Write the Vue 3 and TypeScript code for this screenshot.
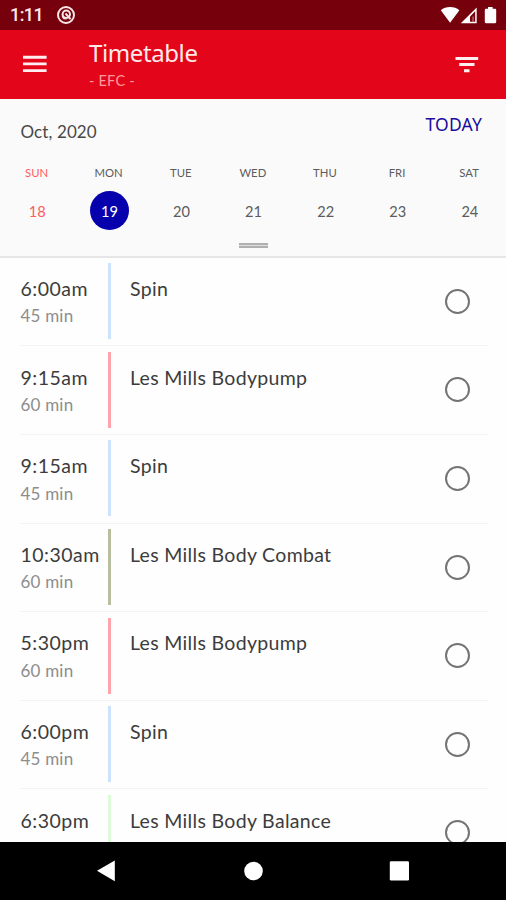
<script setup lang="ts">
interface Day { name: string; num: number }
interface Session { time: string; mins?: number; title: string; tone: string }

const days: Day[] = [
  { name: 'SUN', num: 18 },
  { name: 'MON', num: 19 },
  { name: 'TUE', num: 20 },
  { name: 'WED', num: 21 },
  { name: 'THU', num: 22 },
  { name: 'FRI', num: 23 },
  { name: 'SAT', num: 24 },
]
const selected = 19

const sessions: Session[] = [
  { time: '6:00am', mins: 45, title: 'Spin', tone: 'blue' },
  { time: '9:15am', mins: 60, title: 'Les Mills Bodypump', tone: 'pink' },
  { time: '9:15am', mins: 45, title: 'Spin', tone: 'blue' },
  { time: '10:30am', mins: 60, title: 'Les Mills Body Combat', tone: 'olive' },
  { time: '5:30pm', mins: 60, title: 'Les Mills Bodypump', tone: 'pink' },
  { time: '6:00pm', mins: 45, title: 'Spin', tone: 'blue' },
  { time: '6:30pm', title: 'Les Mills Body Balance', tone: 'green' },
]
</script>

<template>
  <div class="screen">
    <div class="status">
      <span class="clock">1:11</span>
      <svg class="app-icon" width="20" height="20" viewBox="0 0 20 20">
        <circle cx="10" cy="10" r="8" fill="none" stroke="#f8e6e7" stroke-width="2" />
        <circle cx="10.300" cy="9.200" r="3.700" fill="none" stroke="#f8e6e7" stroke-width="2" />
        <path d="M9.500 8.500 14.600 14.200" stroke="#f8e6e7" stroke-width="2" />
        <path d="M5.800 9.500 10.800 14.500 7.500 14.200 5.800 12z" fill="#f8e6e7" />
      </svg>
      <svg class="signals" width="58" height="20" viewBox="0 0 58 20">
        <path d="M.8 5.200C3.300 3.100 6.500 2 10.100 2s6.800 1.100 9.300 3.200L10.100 17.800z" fill="#fff" />
        <path d="M36.700 2.500V18.300H20.800z" fill="#fff" />
        <path d="M35.200 6.300V16.800H30V11.600z" fill="#76000b" />
        <path d="M32.400 11.500h1.300v5.300h-1.300z" fill="#fff" opacity=".45" />
        <path d="M48 2.100h4.600v1.700h2.500q1.100 0 1.100 1.100v12.200q0 1.100-1.100 1.100h-9.200q-1.100 0-1.100-1.100V4.900q0-1.100 1.100-1.100H48z" fill="#fff" />
      </svg>
    </div>

    <header class="bar">
      <svg class="menu" width="24" height="20" viewBox="0 0 24 20">
        <path d="M0 3.200H23.600M0 9.900H23.600M0 16.600H23.600" stroke="#ffeef0" stroke-width="2.900" />
      </svg>
      <div class="heading">
        <h1>Timetable</h1>
        <p>- EFC -</p>
      </div>
      <svg class="filter" width="24" height="20" viewBox="0 0 24 20">
        <path d="M.5 3.400H23.200M4.200 9.600H19.500M9 15.700H14.500" stroke="#ffeef0" stroke-width="3" />
      </svg>
    </header>

    <section class="calendar">
      <div class="cal-head">
        <span class="month">Oct, 2020</span>
        <span class="today">TODAY</span>
      </div>
      <div class="week">
        <div v-for="d in days" :key="d.num" class="day" :class="{ sunday: d.name === 'SUN', selected: d.num === selected }">
          <span class="name">{{ d.name }}</span>
          <span class="num">{{ d.num }}</span>
        </div>
      </div>
      <div class="handle"></div>
    </section>

    <main class="list">
      <article v-for="(s, i) in sessions" :key="i" class="row">
        <div class="when">
          <div class="time">{{ s.time }}</div>
          <div v-if="s.mins" class="mins">{{ s.mins }} min</div>
        </div>
        <div class="stripe" :class="s.tone"></div>
        <div class="title">{{ s.title }}</div>
        <div class="radio"></div>
      </article>
    </main>

    <nav class="nav">
      <svg width="506" height="58" viewBox="0 0 506 58">
        <path d="M97 28.800 114.800 18.600V39.200z" fill="#fff" />
        <circle cx="253.500" cy="29" r="9.300" fill="#fff" />
        <rect x="389.800" y="19.300" width="19.200" height="19.300" rx="1.300" fill="#fff" />
      </svg>
    </nav>
  </div>
</template>

<style>
body { margin: 0; background: #fff; }
</style>

<style scoped>
.screen {
  width: 506px;
  height: 900px;
  display: flex;
  flex-direction: column;
  overflow: hidden;
  background: #fefefe;
  font-family: Lato, "Noto Sans", sans-serif;
}
.status {
  height: 30px;
  flex: none;
  box-sizing: border-box;
  padding: 0 8px 0 10px;
  display: flex;
  align-items: center;
  background: #76000b;
}
.clock {
  width: 46px;
  font: 500 18px/32px Roboto, sans-serif;
  letter-spacing: -.6px;
  color: #fbe9ea;
}
.signals { margin-left: auto; }
.bar {
  height: 68.500px;
  flex: none;
  box-sizing: border-box;
  padding: 0 27px 0 23px;
  display: flex;
  align-items: flex-start;
  background: #e30519;
}
.menu { margin-top: 24px; }
.heading { margin: 7px auto 0 42px; }
h1 {
  margin: 0;
  font: 450 24px/31px "Noto Sans", sans-serif;
  letter-spacing: -.4px;
  color: #ffe9e9;
}
.heading p {
  margin: 2.500px 0 0;
  font-size: 14.500px;
  line-height: 20px;
  letter-spacing: .2px;
  color: #ff9b9f;
}
.filter { margin-top: 25px; }
.calendar {
  height: 159.300px;
  flex: none;
  box-sizing: border-box;
  background: #fafafa;
  border-bottom: 2px solid #e6e6e6;
}
.cal-head {
  height: 60px;
  padding: 0 24px 0 20.500px;
  display: flex;
  justify-content: space-between;
}
.month { font-size: 17px; line-height: 24px; margin-top: 21px; letter-spacing: .1px; color: #484848; }
.today { font: 400 17.500px/24px "Noto Sans", sans-serif; margin-top: 13px; letter-spacing: .2px; color: #1b0b9f; }
.week { display: grid; grid-template-columns: repeat(7, 72.100px); margin-left: .5px; }
.day { display: flex; flex-direction: column; align-items: center; color: #5c5c5c; }
.name { height: 32.500px; line-height: 27px; font-size: 11.300px; }
.num {
  width: 39px;
  height: 39px;
  margin-left: 1.500px;
  border-radius: 50%;
  font-size: 14.600px;
  line-height: 42px;
  text-align: center;
}
.sunday { color: #ff5c5c; }
.selected .num { background: #0600ad; color: #fff; }
.handle {
  width: 29px;
  height: 1px;
  margin: 13px auto 0;
  background: #dedede;
  border: solid #b0b0b0;
  border-width: 2px 0;
}
.list { flex: 1; min-height: 0; overflow: hidden; }
.row {
  height: 88.600px;
  margin: 0 18px 0 20px;
  box-sizing: border-box;
  padding-top: 5.500px;
  border-bottom: 1.600px solid #f4f4f4;
  display: flex;
  align-items: flex-start;
}
.when { width: 87.500px; padding-left: .5px; }
.time, .title { font-size: 19.500px; line-height: 26px; margin-top: 12.700px; color: #3c3c3c; white-space: nowrap; }
.time { letter-spacing: .5px; }
.title { letter-spacing: .32px; }
.mins { font-size: 17px; line-height: 24px; margin-top: 2.500px; letter-spacing: .2px; color: #8d8d8d; }
.stripe { width: 3px; height: 76px; margin-right: 19px; }
.blue { background: #cde3fd; }
.pink { background: #ffa4ad; }
.olive { background: #babea1; }
.green { background: #ddfbd9; }
.radio {
  width: 25px;
  height: 25px;
  box-sizing: border-box;
  border: 2px solid #747474;
  border-radius: 50%;
  margin: 25.500px 18px 0 auto;
}
.nav { height: 58px; flex: none; background: #000; }
.nav svg { display: block; }
</style>
